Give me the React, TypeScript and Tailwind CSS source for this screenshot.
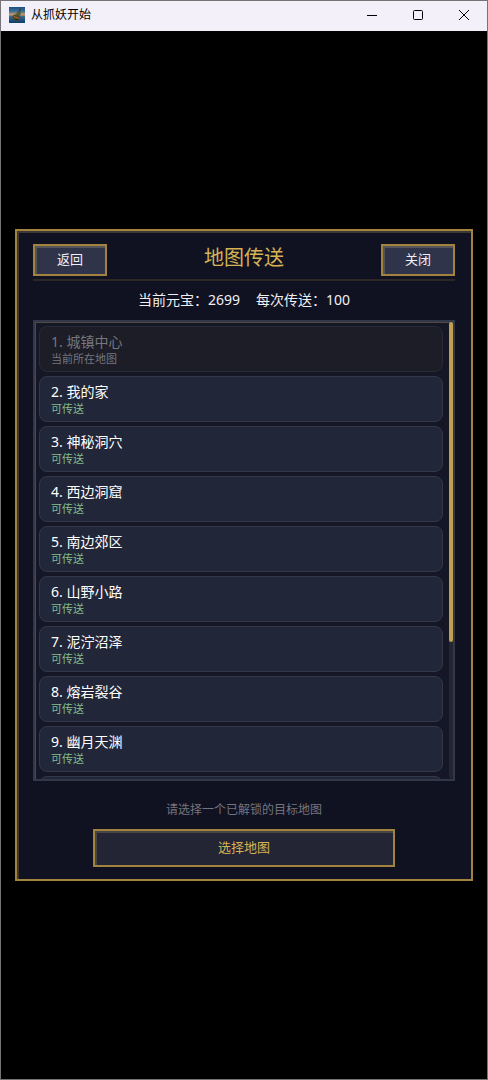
import React from 'react'

type MapEntry = {
  id: number
  name: string
  current?: boolean
}

const maps: MapEntry[] = [
  { id: 1, name: '城镇中心', current: true },
  { id: 2, name: '我的家' },
  { id: 3, name: '神秘洞穴' },
  { id: 4, name: '西边洞窟' },
  { id: 5, name: '南边郊区' },
  { id: 6, name: '山野小路' },
  { id: 7, name: '泥泞沼泽' },
  { id: 8, name: '熔岩裂谷' },
  { id: 9, name: '幽月天渊' },
]

const AppIcon: React.FC = () => (
  <svg viewBox="0 0 16 16" className="h-4 w-4" aria-hidden="true">
    <defs>
      <linearGradient id="sky" x1="0" y1="0" x2="0" y2="1">
        <stop offset="0" stopColor="#1c4f86" />
        <stop offset="0.28" stopColor="#3f7195" />
        <stop offset="0.48" stopColor="#d09a68" />
        <stop offset="0.6" stopColor="#37688a" />
        <stop offset="1" stopColor="#0b3d70" />
      </linearGradient>
    </defs>
    <rect width="16" height="16" fill="url(#sky)" />
    {/* Gourd */}
    <ellipse cx="7.4" cy="10.6" rx="3.9" ry="3.4" fill="#46502f" />
    <ellipse cx="9.6" cy="6.6" rx="2.2" ry="2.2" fill="#5c5a35" />
    <path d="M10 5l1.6-3.2" stroke="#3b3d22" strokeWidth="1.2" />
    <path d="M5 9.6l5 1.8" stroke="#a3532e" strokeWidth="1.2" />
    <path d="M5.4 12.6h4.4" stroke="#1f3226" strokeWidth="1" />
  </svg>
)

const TitleBar: React.FC = () => (
  <header className="flex h-[30px] shrink-0 items-center bg-[#f3f0f9] pb-0.5 pl-2 text-black">
    <AppIcon />
    <span className="ml-1.5 text-xs leading-4">从抓妖开始</span>
    <div className="ml-auto flex h-full">
      <button type="button" aria-label="最小化" className="flex w-[46px] items-center justify-center">
        <svg width="10" height="10" viewBox="0 0 10 10" fill="none" stroke="currentColor">
          <path d="M0 5.5h10" />
        </svg>
      </button>
      <button type="button" aria-label="最大化" className="flex w-[46px] items-center justify-center">
        <svg width="10" height="10" viewBox="0 0 10 10" fill="none" stroke="currentColor">
          <rect x="0.5" y="0.5" width="9" height="9" rx="1" />
        </svg>
      </button>
      <button type="button" aria-label="关闭窗口" className="flex w-[46px] items-center justify-center">
        <svg width="10" height="10" viewBox="0 0 10 10" fill="none" stroke="currentColor">
          <path d="M0 0l10 10M10 0L0 10" />
        </svg>
      </button>
    </div>
  </header>
)

const HeaderButton: React.FC<{ children: React.ReactNode }> = ({ children }) => (
  <button
    type="button"
    className="h-8 w-[74px] border-2 border-[#a1823e] bg-[#30344b] pb-0.5 text-[13px] leading-5 text-[#f0f0f4] shadow-[inset_2px_2px_0_#555558]"
  >
    {children}
  </button>
)

const MapRow: React.FC<{ entry: MapEntry }> = ({ entry }) => (
  <li>
    <button
      type="button"
      disabled={entry.current}
      className={
        entry.current
          ? 'flex h-[46px] w-full flex-col rounded-lg border border-[#2a2a34] bg-[#1c1d26] px-[11px] pt-[5px] text-left text-[#77767e]'
          : 'flex h-[46px] w-full flex-col rounded-lg border border-[#333849] bg-[#212639] px-[11px] pt-[5px] text-left text-white'
      }
    >
      <span className="text-sm leading-5">
        {entry.id}. {entry.name}
      </span>
      <span className={entry.current ? 'text-[11px] leading-[14px]' : 'text-[11px] leading-[14px] text-[#83bd8c]'}>
        {entry.current ? '当前所在地图' : '可传送'}
      </span>
    </button>
  </li>
)

const MapList: React.FC = () => (
  <div className="flex h-[461px] border-2 border-[#33374a] bg-[#151727] shadow-[inset_1px_1px_0_#504a40]">
    <ul className="flex flex-1 flex-col gap-1 overflow-y-auto pt-1 pr-1.5 pl-1 [scrollbar-width:none]">
      {maps.map((entry) => (
        <MapRow key={entry.id} entry={entry} />
      ))}
      <li className="h-[46px] shrink-0 rounded-lg border border-[#333849] bg-[#212639]" aria-hidden="true" />
    </ul>
    {/* Scrollbar */}
    <div className="w-1 rounded-full bg-[#242531]">
      <div className="h-[70%] rounded-full bg-[#c29f4e]" />
    </div>
  </div>
)

const TeleportPanel: React.FC = () => (
  <section className="mx-3.5 flex flex-1 flex-col border-2 border-[#a1823e] bg-[#111221] px-4 pt-[13px] pb-3 shadow-[inset_2px_2px_0_#3c3834]">
    <div className="flex items-start justify-between border-b-2 border-[#2d2728] pb-[3px]">
      <HeaderButton>返回</HeaderButton>
      <h1 className="text-xl leading-7 text-[#d5b254]">地图传送</h1>
      <HeaderButton>关闭</HeaderButton>
    </div>
    <p className="flex h-[39px] items-center justify-center gap-4 pb-0.5 text-sm leading-5 text-[#f0f0f4]">
      <span>当前元宝：2699</span>
      <span>每次传送：100</span>
    </p>
    <MapList />
    <p className="mt-5 text-center text-xs leading-[18px] text-[#74747f]">请选择一个已解锁的目标地图</p>
    <button
      type="button"
      className="mx-auto mt-2.5 h-[38px] w-[302px] border-2 border-[#a1823e] bg-[#232535] pb-0.5 text-[13px] leading-5 text-[#d5b254] shadow-[inset_2px_2px_0_#484544]"
    >
      选择地图
    </button>
  </section>
)

const App: React.FC = () => {
  return (
    <div className="flex min-h-screen flex-col border border-[#777478] bg-black font-['Noto_Sans','Noto_Sans_CJK_SC',sans-serif]">
      <TitleBar />
      <main className="flex flex-1 items-center">
        <TeleportPanel />
      </main>
    </div>
  )
}

export default App
